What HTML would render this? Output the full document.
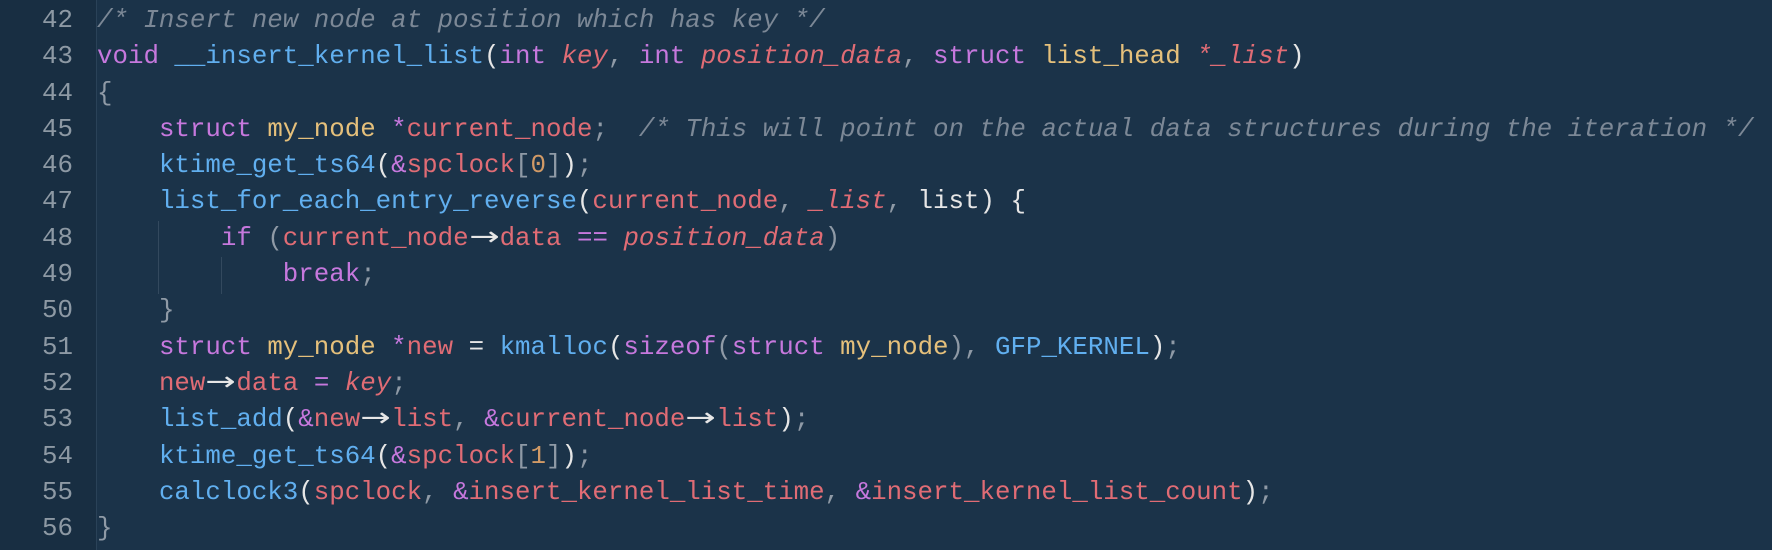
<!DOCTYPE html>
<html><head><meta charset="utf-8"><style>
html,body{margin:0;padding:0;background:#1b3349;width:1772px;height:550px;overflow:hidden}
.g{position:absolute;left:0;top:0;width:96px;height:550px;background:#182e42}
.b{position:absolute;left:96px;top:0;width:1px;height:550px;background:#2a4258}
.v{position:absolute;width:1px;background:#33495e}
.c{position:absolute;left:0;top:3px;font-family:"Liberation Mono",monospace;font-size:25.8px;line-height:36.3px;color:#abb2bf}
.l{height:36.3px;white-space:pre}
.n{display:inline-block;width:73px;text-align:right;color:#8d99a4;margin-right:24px}
.cm{color:#7c8896;font-style:italic}
.k{color:#c678dd}.f{color:#61afef}.t{color:#e5c07b}.r{color:#e06c75}.i{color:#e06c75;font-style:italic}
.w{color:#e6e6e6}.p{color:#8f9aa6}.o{color:#d19a66}
.a{display:inline-block;width:31px;text-align:center;color:#e6e6e6;font-family:"DejaVu Sans",sans-serif;font-size:26px;line-height:20px;transform:scaleX(1.4)}
</style></head><body>
<div class="g"></div><div class="b"></div>
<div class="v" style="left:158px;top:221px;height:73px"></div>
<div class="v" style="left:221px;top:257px;height:37px"></div>
<div class="c"><div class="l"><span class="n">42</span><span class="cm">/* Insert new node at position which has key */</span></div><div class="l"><span class="n">43</span><span class="k">void</span> <span class="f">__insert_kernel_list</span><span class="w">(</span><span class="k">int</span> <span class="i">key</span><span class="p">,</span> <span class="k">int</span> <span class="i">position_data</span><span class="p">,</span> <span class="k">struct</span> <span class="t">list_head</span> <span class="i">*_list</span><span class="w">)</span></div><div class="l"><span class="n">44</span><span class="p">{</span></div><div class="l"><span class="n">45</span>    <span class="k">struct</span> <span class="t">my_node</span> <span class="k">*</span><span class="r">current_node</span><span class="p">;</span>  <span class="cm">/* This will point on the actual data structures during the iteration */</span></div><div class="l"><span class="n">46</span>    <span class="f">ktime_get_ts64</span><span class="w">(</span><span class="k">&amp;</span><span class="r">spclock</span><span class="p">[</span><span class="o">0</span><span class="p">]</span><span class="w">)</span><span class="p">;</span></div><div class="l"><span class="n">47</span>    <span class="f">list_for_each_entry_reverse</span><span class="w">(</span><span class="r">current_node</span><span class="p">,</span> <span class="i">_list</span><span class="p">,</span> <span class="w">list</span><span class="w">)</span> <span class="w">{</span></div><div class="l"><span class="n">48</span>        <span class="k">if</span> <span class="p">(</span><span class="r">current_node</span><span class="a">→</span><span class="r">data</span> <span class="k">==</span> <span class="i">position_data</span><span class="p">)</span></div><div class="l"><span class="n">49</span>            <span class="k">break</span><span class="p">;</span></div><div class="l"><span class="n">50</span>    <span class="p">}</span></div><div class="l"><span class="n">51</span>    <span class="k">struct</span> <span class="t">my_node</span> <span class="k">*</span><span class="r">new</span> <span class="w">=</span> <span class="f">kmalloc</span><span class="w">(</span><span class="k">sizeof</span><span class="p">(</span><span class="k">struct</span> <span class="t">my_node</span><span class="p">)</span><span class="p">,</span> <span class="f">GFP_KERNEL</span><span class="w">)</span><span class="p">;</span></div><div class="l"><span class="n">52</span>    <span class="r">new</span><span class="a">→</span><span class="r">data</span> <span class="k">=</span> <span class="i">key</span><span class="p">;</span></div><div class="l"><span class="n">53</span>    <span class="f">list_add</span><span class="w">(</span><span class="k">&amp;</span><span class="r">new</span><span class="a">→</span><span class="r">list</span><span class="p">,</span> <span class="k">&amp;</span><span class="r">current_node</span><span class="a">→</span><span class="r">list</span><span class="w">)</span><span class="p">;</span></div><div class="l"><span class="n">54</span>    <span class="f">ktime_get_ts64</span><span class="w">(</span><span class="k">&amp;</span><span class="r">spclock</span><span class="p">[</span><span class="o">1</span><span class="p">]</span><span class="w">)</span><span class="p">;</span></div><div class="l"><span class="n">55</span>    <span class="f">calclock3</span><span class="w">(</span><span class="r">spclock</span><span class="p">,</span> <span class="k">&amp;</span><span class="r">insert_kernel_list_time</span><span class="p">,</span> <span class="k">&amp;</span><span class="r">insert_kernel_list_count</span><span class="w">)</span><span class="p">;</span></div><div class="l"><span class="n">56</span><span class="p">}</span></div></div>
</body></html>
